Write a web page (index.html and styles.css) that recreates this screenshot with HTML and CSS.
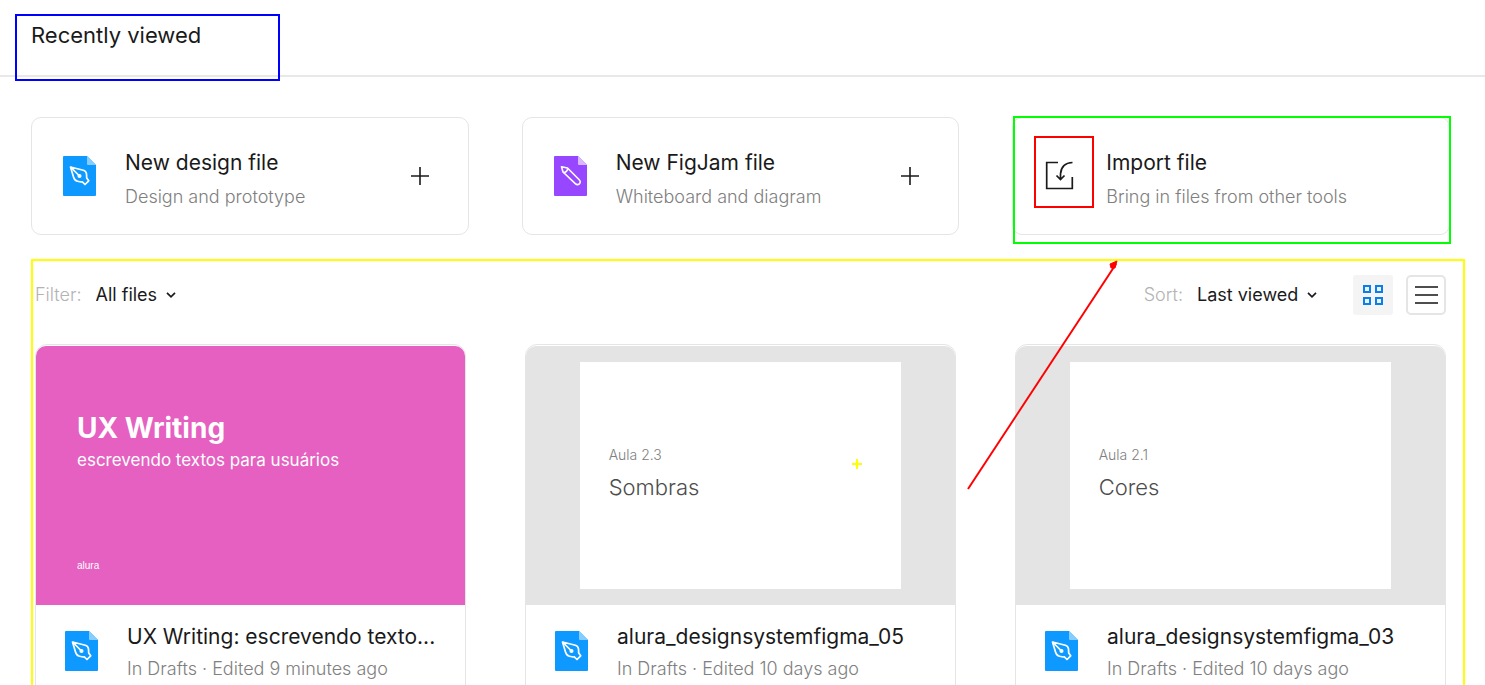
FILE: index.html
```html
<!DOCTYPE html>
<html lang="en">
<head>
<meta charset="utf-8">
<title>Recently viewed</title>
<link rel="stylesheet" href="styles.css">
</head>
<body>
<svg class="sprite" aria-hidden="true">
  <symbol id="pen" viewBox="0 0 33 40">
    <path fill="#0d99ff" d="M1 0h23l9 9v30a1 1 0 0 1-1 1H1a1 1 0 0 1-1-1V1a1 1 0 0 1 1-1z"/>
    <path fill="#86ccff" d="M24 0l9 9h-8a1 1 0 0 1-1-1z"/>
    <g fill="none" stroke="#fff" stroke-width="1.7" stroke-linejoin="round">
      <path d="M7.500 11l3 10c.6 2.200 2 3.700 4 4.200l3.500 .8 1.300-.2 2.700 2.700 3.700-3.700-2-2.800-.2-4.200c-.3-1.800-1.400-3-3.200-3.500z"/>
      <path d="M7.500 11l8.500 8.500"/>
      <circle cx="16.500" cy="20" r="1.200" fill="#fff"/>
    </g>
  </symbol>
  <symbol id="pencil" viewBox="0 0 33 40">
    <path fill="#9747ff" d="M1 0h23l9 9v30a1 1 0 0 1-1 1H1a1 1 0 0 1-1-1V1a1 1 0 0 1 1-1z"/>
    <path fill="#d9b8ff" d="M24 0l9 9h-8a1 1 0 0 1-1-1z"/>
    <g fill="none" stroke="#fff" stroke-width="1.600" stroke-linejoin="round">
      <path d="M7.500 10.800l6 1.200L25.200 23.700c1.600 1.600 1.100 3.300 .1 4.200s-2.700 1-4-.3L9 16z"/>
      <path d="M9.200 16.300c2.300 .6 4.800-1.800 4.400-4.200"/>
    </g>
  </symbol>
  <symbol id="plus" viewBox="0 0 18 18"><path d="M9 0v18M0 9h18" stroke="#1a1a1a" stroke-width="1.600"/></symbol>
  <symbol id="chevron" viewBox="0 0 10 6"><path d="M1 .8l4 4 4-4" fill="none" stroke="#1a1a1a" stroke-width="1.700"/></symbol>
</svg>

<header class="header">
  <h1 class="header-title">Recently viewed</h1>
  <div class="mark mark-title"></div>
</header>

<div class="actions">
  <button class="action" type="button">
    <svg class="file-icon"><use href="#pen"/></svg>
    <span class="labels"><span class="title">New design file</span><span class="sub">Design and prototype</span></span>
    <svg class="plus"><use href="#plus"/></svg>
  </button>
  <button class="action" type="button">
    <svg class="file-icon"><use href="#pencil"/></svg>
    <span class="labels"><span class="title">New FigJam file</span><span class="sub">Whiteboard and diagram</span></span>
    <svg class="plus"><use href="#plus"/></svg>
  </button>
  <button class="action" type="button">
    <svg class="file-icon" viewBox="-5 0 33 40">
      <path d="M9 6.500H-2.300v26H23.300V21M23.500 6.500c-7 .3-11.500 4.500-12 11.500v5.500M7.500 19.500l4 4 4-4" fill="none" stroke="#1a1a1a" stroke-width="1.700"/>
    </svg>
    <span class="labels"><span class="title">Import file</span><span class="sub">Bring in files from other tools</span></span>
    <span class="mark mark-icon"></span>
    <span class="mark mark-card"></span>
  </button>
</div>

<main class="files">
  <div class="toolbar">
    <label class="field-label" for="filter">Filter:</label>
    <span class="field"><select id="filter"><option>All files</option></select><svg class="chevron"><use href="#chevron"/></svg></span>
    <label class="field-label sort-label" for="sort">Sort:</label>
    <span class="field"><select id="sort"><option>Last viewed</option></select><svg class="chevron"><use href="#chevron"/></svg></span>
    <button class="view view-grid" type="button" aria-label="Grid view">
      <svg width="20" height="20" fill="#e8f3fd" stroke="#0a7fea" stroke-width="2"><path d="M1 1h6v6H1zM13 1h6v6h-6zM1 13h6v6H1zM13 13h6v6h-6z"/></svg>
    </button>
    <button class="view view-list" type="button" aria-label="List view">
      <svg width="23" height="18" stroke="#4d4d4d" stroke-width="2"><path d="M0 1h23M0 9h23M0 17h23"/></svg>
    </button>
  </div>

  <div class="grid">
    <article class="card">
      <div class="thumb thumb-pink">
        <strong class="cover-title">UX Writing</strong>
        <span class="cover-sub">escrevendo textos para usuários</span>
        <span class="cover-brand">alura</span>
      </div>
      <div class="meta">
        <svg class="file-icon"><use href="#pen"/></svg>
        <div class="labels"><h2 class="title">UX Writing: escrevendo texto...</h2><p class="sub">In Drafts · Edited 9 minutes ago</p></div>
      </div>
    </article>
    <article class="card">
      <div class="thumb">
        <div class="slide"><span class="lesson">Aula 2.3</span><span class="topic">Sombras</span></div>
        <svg class="cross" viewBox="0 0 10 10"><path d="M5 0v10M0 5h10" stroke="#ff0" stroke-width="2"/></svg>
      </div>
      <div class="meta">
        <svg class="file-icon"><use href="#pen"/></svg>
        <div class="labels"><h2 class="title">alura_designsystemfigma_05</h2><p class="sub">In Drafts · Edited 10 days ago</p></div>
      </div>
    </article>
    <article class="card">
      <div class="thumb">
        <div class="slide"><span class="lesson">Aula 2.1</span><span class="topic">Cores</span></div>
      </div>
      <div class="meta">
        <svg class="file-icon"><use href="#pen"/></svg>
        <div class="labels"><h2 class="title">alura_designsystemfigma_03</h2><p class="sub">In Drafts · Edited 10 days ago</p></div>
      </div>
      <svg class="arrow" viewBox="0 0 152 230"><path d="M1 229L149 4" stroke="#f00" stroke-width="2"/><path d="M150 1l-7 3 1 4h4z" fill="#f00" stroke="#f00"/></svg>
    </article>
  </div>
</main>
</body>
</html>
```
FILE: styles.css
```css
* { box-sizing: border-box; }
body {
  margin: 0;
  height: 100vh;
  display: flex;
  flex-direction: column;
  overflow: hidden;
  background: #fff;
  color: #1a1a1a;
  font-family: Inter, "Liberation Sans", sans-serif;
}
h1, h2, p { margin: 0; }
button, select { font: inherit; color: inherit; }
svg { display: block; flex: none; overflow: visible; }
.sprite { position: absolute; width: 0; height: 0; }

.header {
  position: relative;
  padding: 19px 31px 24px;
  border-bottom: 2px solid #e8e8e8;
}
.header-title { font-size: 22px; line-height: 32px; font-weight: 400; }

/* Annotation frames lie over the interface */
.mark { position: absolute; border: 2px solid; pointer-events: none; }
.mark-title { left: 15px; top: 14px; width: 265px; height: 67px; border-color: #00f; z-index: 1; }
.mark-icon { left: 21px; top: 18px; width: 60px; height: 72px; border-color: #f00; }
.mark-card { inset: -2px -2px -10px 0; border-color: #0f0; }

.actions {
  display: grid;
  grid-template-columns: repeat(3, minmax(0, 1fr));
  gap: 53px;
  padding: 40px 35px 24px 31px;
}
.action {
  position: relative;
  display: flex;
  align-items: center;
  gap: 29px;
  padding: 20px 39px 20px 31px;
  border: 1px solid #e5e5e5;
  border-radius: 10px;
  background: #fff;
  text-align: left;
}
.action .labels { padding-top: 8px; }
.file-icon { width: 33px; height: 40px; }
.plus { width: 18px; height: 18px; }
.labels { display: flex; flex-direction: column; flex: 1; min-width: 0; }
.title {
  font-size: 21px;
  line-height: 34px;
  font-weight: 400;
  white-space: nowrap;
}
.sub { font-size: 18px; line-height: 34px; font-weight: 300; color: #808080; white-space: nowrap; }

.files {
  flex: 1;
  min-height: 0;
  margin: 0 20px 0 31px;
  padding: 14px 17px 0 2px;
  border: 2px solid #ff0;
  border-bottom: 0;
}
.toolbar { display: flex; align-items: center; font-size: 18px; line-height: 24px; }
.field-label { color: #b3b3b3; font-weight: 300; margin-right: 14px; }
.sort-label { margin-left: auto; }
.field { display: flex; align-items: center; gap: 8px; }
select { appearance: none; border: 0; padding: 0; background: none; }
.chevron { width: 10px; height: 6px; }
.view {
  width: 40px;
  height: 40px;
  display: grid;
  place-items: center;
  padding: 0;
  border: 0;
  border-radius: 3px;
}
.view-grid { margin-left: 36px; background: #f4f4f4; }
.view-list { margin-left: 13px; background: #fff; border: 2px solid #e5e5e5; border-radius: 5px; }

.grid {
  display: grid;
  grid-template-columns: repeat(3, minmax(0, 1fr));
  gap: 59px;
  margin-top: 29px;
}
.card { position: relative; border: 1px solid #e5e5e5; border-radius: 12px; padding-top: 1px; }
.thumb {
  position: relative;
  aspect-ratio: 428 / 258;
  padding: 16px 0;
  background: #e4e4e4;
  border-radius: 10px 10px 0 0;
}
.thumb-pink {
  display: flex;
  flex-direction: column;
  padding: 64px 41px 28px;
  background: #e560c1;
  color: #fff;
}
.cover-title { font-size: 28px; line-height: 36px; font-weight: 700; }
.cover-sub { font-size: 17px; line-height: 28px; white-space: nowrap; }
.cover-brand { margin-top: auto; font: 10px/22px "Liberation Sans", sans-serif; }
.slide {
  width: 75%;
  height: 100%;
  margin: 0 auto;
  padding: 80px 29px 0;
  display: flex;
  flex-direction: column;
  background: #fff;
}
.lesson { font-size: 14px; line-height: 26px; font-weight: 300; color: #808080; }
.topic { font-size: 22px; line-height: 38px; font-weight: 300; color: #4d4d4d; }
.meta { display: flex; align-items: center; gap: 29px; padding: 12px 14px 16px 29px; }
.meta .labels { padding-top: 4px; }
.meta .title, .meta .sub { line-height: 32px; }
.cross { position: absolute; left: 326px; top: 113px; width: 10px; height: 10px; }
.arrow { position: absolute; left: -49px; top: -85px; width: 152px; height: 230px; }
```
